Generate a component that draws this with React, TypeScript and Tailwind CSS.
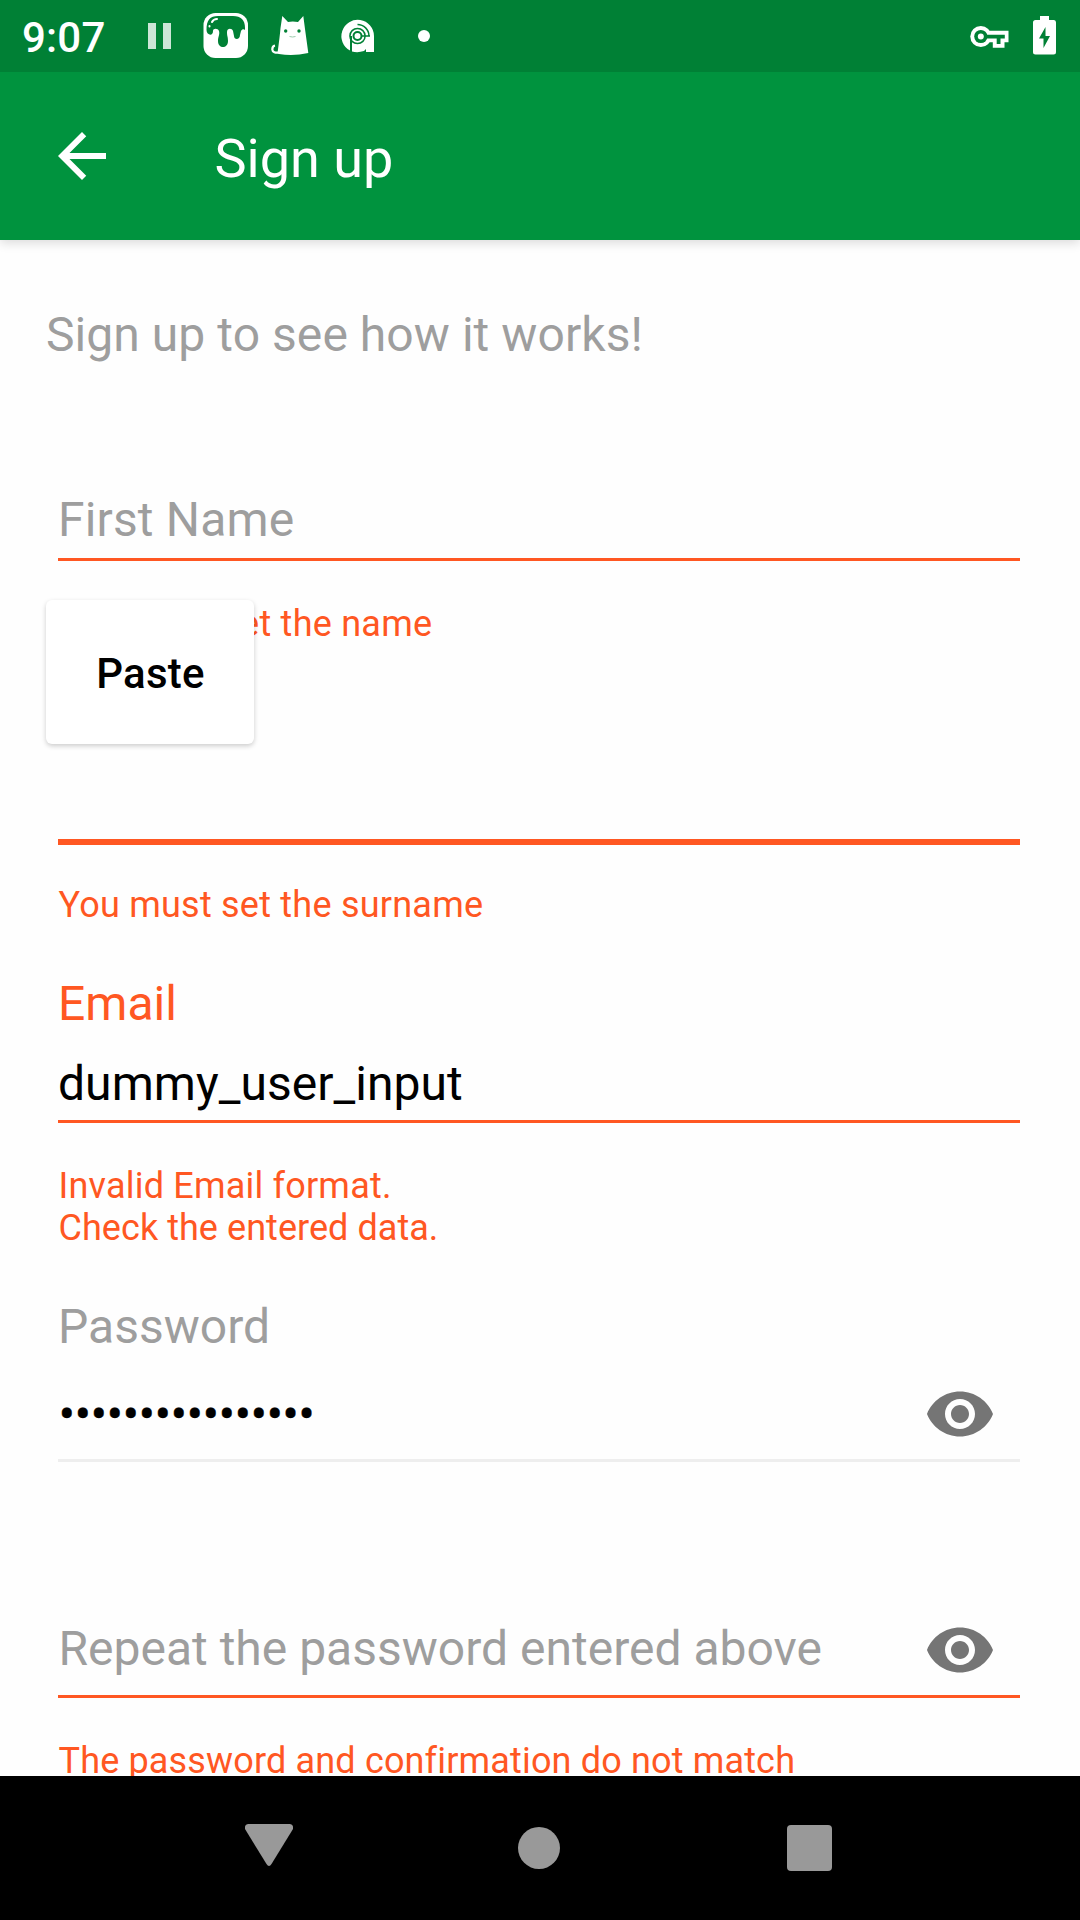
import React from "react";
import { MdArrowBack, MdVisibility } from "react-icons/md";

function StatusBar() {
  return (
    <div className="relative z-20 flex h-[72px] w-full shrink-0 items-center bg-[#008035] text-white">
      <span className="ml-[22px] w-[126px] pt-[3px] text-[42px] leading-[69px] font-medium tracking-[0.2px]">9:07</span>
      <svg className="h-[72px] w-[290px] shrink-0" viewBox="148 0 290 72" fill="none">
        <path d="M148 23h8v26h-8zM163 23h8v26h-8z" fill="#cce6d7" />
        <rect x="203.5" y="13" width="44.5" height="45" rx="12" fill="#fff" />
        <path
          d="M206.500 30C206.500 20 210 16 218 16h15c8 0 12 4 12 12v2c-1-1-3-1-4 1l-1 4c0 5-6 5-6 1l-1-5c-1-3-6-3-6 1 0 5 1 4 1 9 0 8-10 8-10 0 0-5 2-6 1-10-1-3-6-3-6 0 0 6-6.500 4-6.500-1Z"
          fill="#008035"
        />
        <path d="M212 22c1-2 3-3 5-3M209.500 26v.5" stroke="#fff" strokeWidth="2" strokeLinecap="round" />
        <path
          d="M282.300 16L288 22Q292.500 20.800 298 22L303.300 16L305 29L308.300 53Q293 56.500 279 54L277.500 53Q280 35 280.500 28Z"
          fill="#fff"
        />
        <path d="M280 52.500Q272.500 53.500 272.300 49.500Q272.300 46 275 45.500" stroke="#fff" strokeWidth="2.200" />
        <circle cx="285.700" cy="31" r="1.700" fill="#008035" />
        <circle cx="299" cy="31" r="1.700" fill="#008035" />
        <path d="M289.500 36.500q3 1 6 0" stroke="#9bccad" strokeWidth="1" />
        <path d="M374 52V36a16.300 16.300 0 1 0-24 14.500V36h2v15.500q6 1.500 12-.5l2-2v3Z" fill="#fff" />
        <circle cx="357.500" cy="36" r="7.600" stroke="#008035" strokeWidth="1.500" />
        <circle cx="357.500" cy="36" r="4" stroke="#008035" strokeWidth="2" />
        <path d="M357.500 24.500A11.500 11.500 0 0 1 369 36M362 36h8" stroke="#008035" strokeWidth="1.500" />
        <circle cx="424" cy="36" r="6" fill="#fff" />
      </svg>
      <svg className="mr-[20px] ml-auto h-[72px] w-[92px]" viewBox="968 0 92 72">
        <circle cx="980.800" cy="36.500" r="10.500" fill="#fff" />
        <path d="M986 30.800h22.500v11.500h-4v5.500h-11.700v-5.500H986Z" fill="#fff" />
        <circle cx="980.800" cy="36.500" r="6.600" fill="#008035" />
        <path d="M984 34.700h20.800v3.700h-4.300v5.600h-3.800v-5.600H984Z" fill="#008035" />
        <circle cx="980.800" cy="36.500" r="3" fill="#fff" />
        <path
          d="M1040 16h9v4h5a2.500 2.500 0 0 1 2 2.500V52a2.500 2.500 0 0 1-2.500 2.500h-18A2.500 2.500 0 0 1 1033 52V22.500a2.500 2.500 0 0 1 2.500-2.500h4.500Z"
          fill="#fff"
        />
        <path d="M1045.500 27v9h4.500l-6.500 12v-9.500h-4.500Z" fill="#008035" />
      </svg>
    </div>
  );
}

function AppBar() {
  return (
    <header className="z-10 flex h-[168px] shrink-0 items-center bg-[#00933e] text-white shadow-[0_3px_10px_rgba(0,0,0,0.14)]">
      <MdArrowBack className="ml-[46px] h-[72px] w-[72px]" />
      <h1 className="mt-[6px] ml-[96.5px] text-[54px] leading-[64px] font-normal">Sign up</h1>
    </header>
  );
}

function ErrorText({ children }: { children: React.ReactNode }) {
  return <p className="pl-[0.5px] text-[36px] leading-[42px] text-[#ff5722]">{children}</p>;
}

function Form() {
  return (
    <main className="flex h-[1536px] shrink-0 flex-col overflow-hidden bg-[#fefefe] text-[48px] leading-[56px] text-[#9e9e9e]">
      <p className="mt-[67px] ml-[46px] tracking-[0.06px]">Sign up to see how it works!</p>

      <div className="ml-[58px] w-[962px]">
        <section className="relative mt-[129px] h-[281px]">
          <div className="h-[69px] border-b-[3px] border-[#ff5722] tracking-[0.15px]">First Name</div>
          <div className="pt-[42px] tracking-[0.25px]">
            <ErrorText>You must set the name</ErrorText>
          </div>
          <button className="absolute top-[108px] -left-[12px] h-[144px] w-[208px] rounded-[6px] bg-white pt-[4px] pl-[1px] text-[42px] font-medium tracking-[0.2px] text-black shadow-[0_2px_5px_rgba(0,0,0,0.2)]">
            Paste
          </button>
        </section>

        <section className="h-[203px]">
          <div className="h-[72px] border-b-[6px] border-[#ff5722]" />
          <div className="pt-[39px] tracking-[0.23px]">
            <ErrorText>You must set the surname</ErrorText>
          </div>
        </section>

        <section className="h-[323px]">
          <label className="block text-[#ff5722]">Email</label>
          <div className="mt-[24px] h-[67px] border-b-[3px] border-[#ff5722] tracking-[0.05px] text-black">
            dummy_user_input
          </div>
          <div className="pt-[42px]">
            <ErrorText>
              <span className="tracking-[0.2px]">Invalid Email format.</span>
              <br />
              <span className="tracking-[0.05px]">Check the entered data.</span>
            </ErrorText>
          </div>
        </section>

        <section className="h-[315px]">
          <label className="block">Password</label>
          <div className="flex h-[107px] items-center justify-between border-b-[3px] border-[#eeeeee] pt-[13px] pr-[24px]">
            <span className="pt-[2px] pl-[0.7px] tracking-[-0.2px] text-black [-webkit-text-stroke:0.4px_black]">
              ••••••••••••••••
            </span>
            <MdVisibility className="h-[72px] w-[72px] text-[#757575]" />
          </div>
        </section>

        <section>
          <div className="flex h-[84px] items-start justify-between border-b-[3px] border-[#ff5722] pr-[24px]">
            <span className="mt-[7px] pl-[0.5px]">Repeat the password entered above</span>
            <MdVisibility className="h-[72px] w-[72px] text-[#757575]" />
          </div>
          <div className="pt-[42px] tracking-[0.16px]">
            <ErrorText>The password and confirmation do not match</ErrorText>
          </div>
        </section>
      </div>
    </main>
  );
}

function NavigationBar() {
  return (
    <nav className="flex h-[144px] shrink-0 items-center bg-black pl-[245px]">
      <svg className="h-[48px] w-[48px]" viewBox="0 0 48 48" fill="#999">
        <path d="M3 0h42q4 1 3 5L26.500 40q-2.500 4-5 0L0 5Q-1 1 3 0Z" />
      </svg>
      <div className="ml-[225px] h-[42px] w-[42px] rounded-full bg-[#999999]" />
      <div className="ml-[227px] h-[46px] w-[45px] rounded-[4px] bg-[#999999]" />
    </nav>
  );
}

export default function App() {
  return (
    <div className="flex h-[1920px] w-[1080px] flex-col overflow-hidden font-['Roboto',sans-serif]">
      <StatusBar />
      <AppBar />
      <Form />
      <NavigationBar />
    </div>
  );
}
